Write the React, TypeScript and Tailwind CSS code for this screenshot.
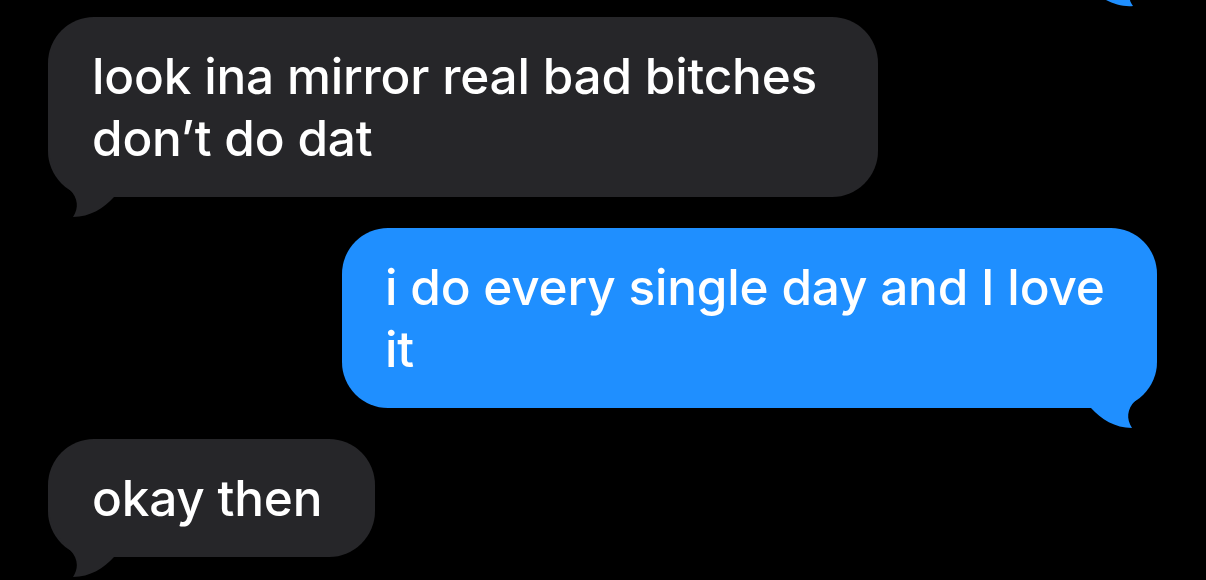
import React from "react";

type Side = "left" | "right";

const GRAY = "#262629";
const BLUE = "#1f8fff";

// iMessage-style tail that hangs off the bubble's bottom corner
function Tail({ side, color }: { side: Side; color: string }) {
  return (
    <svg
      width="100"
      height="82"
      viewBox="0 -60 100 82"
      className={
        side === "left"
          ? "pointer-events-none absolute bottom-[-22px] left-0"
          : "pointer-events-none absolute bottom-[-22px] right-0 -scale-x-100"
      }
    >
      <path
        d="M0,-57 C0,-32 12,-17 22,-7 C30,1 31,11 25,20 C42,20 56,11 66,0 L92,0 L92,-57 Z"
        fill={color}
      />
    </svg>
  );
}

function Bubble({
  side,
  textWidth = "w-fit",
  children,
}: {
  side: Side;
  textWidth?: string;
  children: React.ReactNode;
}) {
  const incoming = side === "left";
  return (
    <div
      className={
        incoming
          ? "relative ml-[48px] self-start rounded-[46px] bg-[#262629] py-[28px] pl-[44px] pr-[53px]"
          : "relative mr-[49px] self-end rounded-[46px] bg-[#1f8fff] py-[28px] pl-[43px] pr-[44px]"
      }
    >
      <Tail side={side} color={incoming ? GRAY : BLUE} />
      <p
        className={`relative ${textWidth} text-[49.5px] font-medium leading-[62px] tracking-[-0.2px] text-white`}
      >
        {children}
      </p>
    </div>
  );
}

export default function App() {
  return (
    <div
      className="relative flex h-[580px] w-full flex-col gap-[31px] overflow-hidden bg-black pt-[17px]"
      style={{ fontFamily: "Inter, 'Noto Sans', sans-serif" }}
    >
      {/* tip of the previous outgoing bubble's tail, cut off by the top edge */}
      <svg
        width="40"
        height="10"
        viewBox="1100 0 40 10"
        className="absolute left-[1100px] top-0"
      >
        <path
          d="M1106,0 C1114,4 1124,7 1133,6 C1131,3 1130,1 1130,0 Z"
          fill={BLUE}
        />
      </svg>

      <Bubble side="left" textWidth="w-[733px]">
        look ina mirror real bad bitches don’t do dat
      </Bubble>
      <Bubble side="right" textWidth="w-[728px]">
        i do every single day and I love it
      </Bubble>
      <Bubble side="left">okay then</Bubble>
    </div>
  );
}
